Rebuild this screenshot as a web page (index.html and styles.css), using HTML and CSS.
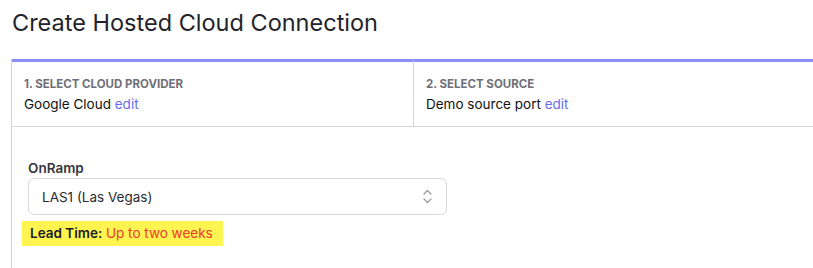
FILE: index.html
```html
<!DOCTYPE html>
<html lang="en">
<head>
  <meta charset="UTF-8">
  <title>Create Hosted Cloud Connection</title>
  <link rel="stylesheet" href="styles.css">
</head>
<body>
  <h1>Create Hosted Cloud Connection</h1>

  <div class="wizard">
    <!-- pasos -->
    <div class="steps">
      <div class="step">
        <div class="step-title">1. Select Cloud Provider</div>
        <div class="step-value">Google Cloud <a href="#">edit</a></div>
      </div>
      <div class="step">
        <div class="step-title">2. Select Source</div>
        <div class="step-value">Demo source port <a href="#">edit</a></div>
      </div>
    </div>

    <!-- formulario -->
    <div class="panel">
      <label class="field-label">OnRamp</label>
      <div class="select">
        <span>LAS1 (Las Vegas)</span>
        <svg width="9" height="15" viewBox="0 0 9 15" fill="none" stroke="#9a9aa2" stroke-width="1.3" stroke-linecap="round" stroke-linejoin="round">
          <path d="M1 5 L4.5 1.5 L8 5"/>
          <path d="M1 10 L4.5 13.5 L8 10"/>
        </svg>
      </div>
      <div class="lead-time"><b>Lead Time:</b> <span>Up to two weeks</span></div>
    </div>
  </div>
</body>
</html>
```

FILE: styles.css
```css
body {
  margin: 0;
  padding: 0 0 0 11px;
  font-family: Inter, "Noto Sans", sans-serif;
  background: white;
  color: #1c1c24;
  overflow: hidden;
}
h1 {
  margin: 0;
  padding: 8px 0 0 1px;
  height: 59px;
  box-sizing: border-box;
  font-size: 23.5px;
  font-weight: 400;
  color: #23232b;
}
.wizard {
  width: 830px;
  border-left: 1px solid #d3d3dd;
  height: 220px;
}
.steps {
  display: flex;
  border-bottom: 1px solid #d3d3dd;
}
.step {
  flex: 0 0 401px;
  border-top: 3px solid #8a8ef5;
  padding: 15px 12px 0 12px;
  height: 67px;
  box-sizing: border-box;
}
.step + .step {
  flex: 1;
  border-left: 1px solid #d3d3dd;
}
.step-title {
  font-size: 11.5px;
  font-weight: 700;
  text-transform: uppercase;
  color: #6f6f78;
}
.step-value {
  margin-top: 5px;
  font-size: 13.5px;
  color: #111;
}
.step-value a {
  color: #6b6bee;
  text-decoration: none;
}
.panel {
  padding: 33px 16px 0 10px;
}
.field-label {
  display: block;
  margin-left: 6px;
  font-size: 13.5px;
  font-weight: 600;
  color: #333640;
}
.select {
  margin: 2px 0 0 6px;
  width: 419px;
  height: 37px;
  box-sizing: border-box;
  border: 1px solid #d8d8df;
  border-radius: 6px;
  display: flex;
  align-items: center;
  justify-content: space-between;
  padding: 0 14px 0 13px;
  font-size: 13.5px;
  color: #2a2a33;
}
.lead-time {
  width: fit-content;
  margin-top: 6px;
  background: #fff450;
  padding: 4px 10px 5px 8px;
  font-size: 13.5px;
  color: #1c1c24;
}
.lead-time b {
  font-weight: 600;
}
.lead-time span {
  color: #f03a2c;
}
```
